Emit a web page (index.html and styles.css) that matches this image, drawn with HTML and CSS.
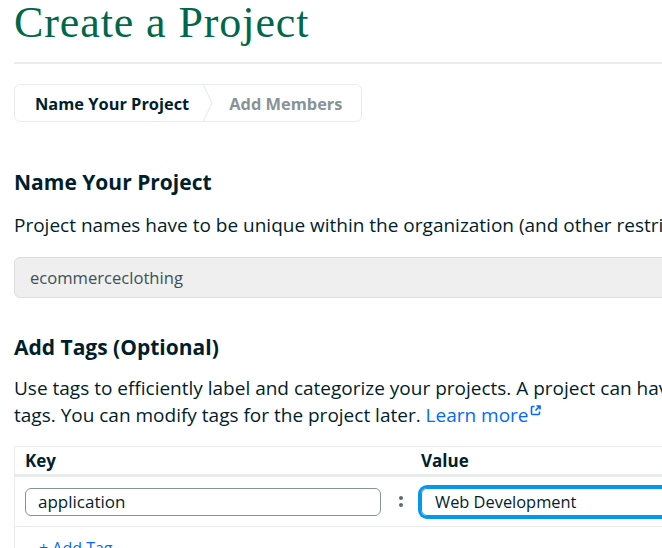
FILE: index.html
```html
<!DOCTYPE html>
<html lang="en">
<head>
<meta charset="utf-8">
<title>Create a Project</title>
<link rel="stylesheet" href="styles.css">
</head>
<body>
<div class="page">
  <h1 class="title">Create a Project</h1>
  <hr class="rule">
  <nav class="steps">
    <span class="step step-active">Name Your Project</span>
    <svg class="chevron" width="14" height="38" viewBox="0 0 14 38" aria-hidden="true">
      <polyline points="2,0 11,19 2,38" fill="none" stroke="#E8EDEB" stroke-width="1.2"/>
    </svg>
    <span class="step">Add Members</span>
  </nav>

  <section class="section">
    <h2 class="heading">Name Your Project</h2>
    <p class="desc">Project names have to be unique within the organization (and other restrictions apply).</p>
    <div class="name-input">ecommerceclothing</div>
  </section>

  <section class="section section-tags">
    <h2 class="heading">Add Tags (Optional)</h2>
    <p class="desc desc-tags">Use tags to efficiently label and categorize your projects. A project can have up to 50<br>tags. You can modify tags for the project later. <a class="link" href="#">Learn more<svg class="ext" width="11" height="11" viewBox="0 0 11 11" aria-hidden="true"><path d="M4.5 1.5H2.5a1 1 0 0 0-1 1v6a1 1 0 0 0 1 1h6a1 1 0 0 0 1-1V6.5" fill="none" stroke="#016BF8" stroke-width="1.6"/><path d="M6.5 1h3.5v3.5M10 1L5.5 5.5" fill="none" stroke="#016BF8" stroke-width="1.6"/></svg></a></p>

    <div class="tags-table">
      <div class="tags-head">
        <div class="col-key">Key</div>
        <div class="col-sep"></div>
        <div class="col-value">Value</div>
      </div>
      <div class="tags-row">
        <div class="col-key"><div class="field field-key">application</div></div>
        <div class="col-sep"><span class="dots"><i></i><i></i></span></div>
        <div class="col-value"><div class="field field-focus">Web Development</div></div>
      </div>
      <div class="tags-row tags-row-add">
        <a class="add-link" href="#">+ Add Tag</a>
      </div>
    </div>
  </section>
</div>
</body>
</html>
```

FILE: styles.css
```css
html, body {
  margin: 0;
  padding: 0;
  background: #ffffff;
  overflow: hidden;
}

body {
  font-family: "Open Sans", "Liberation Sans", sans-serif;
  color: #001E2B;
}

.page {
  width: 1000px;
  padding: 0 0 0 14px;
}

.title {
  margin: 0;
  padding-top: 1px;
  font-family: "Liberation Serif", serif;
  font-weight: normal;
  font-size: 44px;
  line-height: 44px;
  letter-spacing: 0.9px;
  color: #00684A;
}

.rule {
  margin: 17px 0 0 0;
  border: 0;
  height: 2px;
  background: #E8EDEB;
}

.steps {
  margin-top: 20px;
  display: inline-flex;
  align-items: center;
  height: 36px;
  border: 1px solid #E8EDEB;
  border-radius: 6px;
}

.step {
  font-weight: 700;
  font-size: 16.4px;
  color: #889397;
  padding: 0 19px 0 14px;
}

.step-active {
  color: #001E2B;
  padding: 0 12px 0 20px;
}

.chevron {
  display: block;
}

.section {
  margin-top: 46px;
}

.heading {
  margin: 0;
  font-size: 21px;
  line-height: 28px;
  font-weight: 700;
  color: #001E2B;
}

.desc {
  margin: 16px 0 0 0;
  font-size: 19px;
  line-height: 27px;
  white-space: nowrap;
}

.name-input {
  margin-top: 18px;
  height: 39px;
  display: flex;
  align-items: center;
  padding-left: 15px;
  background: #EFEFEF;
  border: 1px solid #DEDEDE;
  border-radius: 6px;
  font-size: 16.6px;
  color: #3D4F58;
}

.section-tags {
  margin-top: 35px;
}

.desc-tags {
  margin-top: 14px;
}

.link {
  color: #016BF8;
  text-decoration: none;
}

.ext {
  vertical-align: 6px;
  margin-left: 1px;
}

.tags-table {
  margin-top: 17px;
  border-top: 1px solid #E8EDEB;
  border-left: 1px solid #E8EDEB;
}

.tags-head {
  display: flex;
  align-items: center;
  height: 27px;
  border-bottom: 3px solid #E8EDEB;
  font-weight: 700;
  font-size: 17px;
}

.tags-row {
  display: flex;
  align-items: center;
  height: 49px;
  border-bottom: 1px solid #E8EDEB;
}

.col-key {
  width: 356px;
  padding-left: 10px;
}

.col-sep {
  width: 40px;
  display: flex;
  justify-content: center;
}

.col-value {
  flex: 1;
}

.field {
  height: 26px;
  display: flex;
  align-items: center;
  padding-left: 12px;
  border: 1px solid #889397;
  border-radius: 6px;
  font-size: 16.4px;
  color: #001E2B;
}

.field-key {
  font-size: 17px;
}

.field-focus {
  border-color: #0498EC;
  box-shadow: 0 0 0 3px #0498EC;
  padding-left: 13px;
}

.dots {
  display: flex;
  flex-direction: column;
  gap: 3px;
}

.dots i {
  display: block;
  width: 4px;
  height: 4px;
  border-radius: 50%;
  background: #5C6C75;
}

.tags-row-add {
  align-items: flex-start;
  padding-top: 10px;
  padding-left: 24px;
}

.add-link {
  color: #016BF8;
  text-decoration: none;
  font-size: 16px;
}
```
